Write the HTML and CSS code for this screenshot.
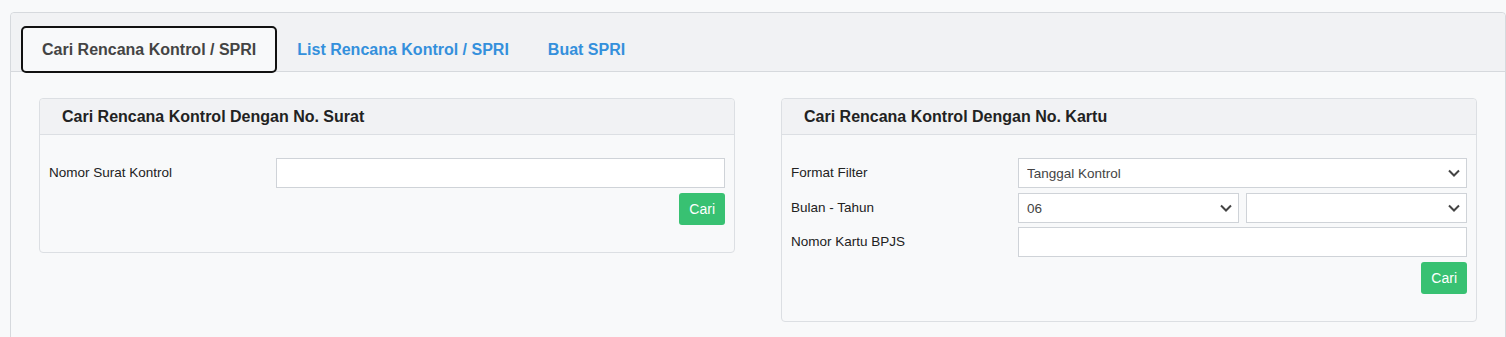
FILE: index.html
```html
<!DOCTYPE html>
<html>
<head>
    <title>Rencana Kontrol / SPRI</title>
    <meta charset="utf-8">
    <link rel="stylesheet" href="styles.css">
</head>
<body>
    <div class="panel">
        <!-- tab -->
        <div class="tabs">
            <a class="tab active" href="#">Cari Rencana Kontrol / SPRI</a>
            <a class="tab" href="#">List Rencana Kontrol / SPRI</a>
            <a class="tab" href="#">Buat SPRI</a>
        </div>

        <div class="tab-body">
            <!-- cari dengan no. surat -->
            <div class="card">
                <div class="card-header">Cari Rencana Kontrol Dengan No. Surat</div>
                <div class="card-body">
                    <div class="form-row">
                        <label>Nomor Surat Kontrol</label>
                        <input type="text" class="form-control">
                    </div>
                    <div class="actions">
                        <button class="btn-success">Cari</button>
                    </div>
                </div>
            </div>

            <!-- cari dengan no. kartu -->
            <div class="card">
                <div class="card-header">Cari Rencana Kontrol Dengan No. Kartu</div>
                <div class="card-body">
                    <div class="form-row">
                        <label>Format Filter</label>
                        <select class="form-control">
                            <option>Tanggal Kontrol</option>
                            <option>Tanggal Entri</option>
                        </select>
                    </div>
                    <div class="form-row">
                        <label>Bulan - Tahun</label>
                        <div class="split">
                            <select class="form-control">
                                <option>06</option>
                            </select>
                            <select class="form-control">
                                <option></option>
                            </select>
                        </div>
                    </div>
                    <div class="form-row tight">
                        <label>Nomor Kartu BPJS</label>
                        <input type="text" class="form-control">
                    </div>
                    <div class="actions">
                        <button class="btn-success">Cari</button>
                    </div>
                </div>
            </div>
        </div>
    </div>
</body>
</html>
```

FILE: styles.css
```css
body, html {
    margin: 0;
    padding: 0;
    background: #f8f9fa;
    font-family: 'Liberation Sans', Arial, sans-serif;
    color: #212529;
}

body {
    padding: 12px 0 0 10px;
}

.panel {
    border: 1px solid #d6d9dd;
    border-radius: 4px 4px 0 0;
    height: 340px;
    box-sizing: border-box;
    background: #f8f9fa;
}

.tabs {
    display: flex;
    background: #f1f2f4;
    border-bottom: 1px solid #d6d9dd;
    border-radius: 4px 4px 0 0;
    padding: 13px 10px 0;
    height: 45px;
}

.tab {
    display: block;
    height: 47px;
    line-height: 43px;
    box-sizing: border-box;
    padding: 0 17px 0 18px;
    border: 2px solid transparent;
    border-radius: 5px;
    font-size: 16px;
    font-weight: bold;
    color: #3490dc;
    text-decoration: none;
}

.tab.active {
    padding: 0 19px;
    color: #444;
    border-color: #111;
    background: #f8f9fa;
    position: relative;
    z-index: 1;
}

.tab-body {
    display: flex;
    gap: 46px;
    padding: 26px 28px 0;
    align-items: flex-start;
}

.card {
    flex: 1;
    border: 1px solid #dcdfe3;
    border-radius: 4px;
    background: #f8f9fa;
}

.card-header {
    background: #f1f2f4;
    border-bottom: 1px solid #dcdfe3;
    border-radius: 4px 4px 0 0;
    height: 35px;
    line-height: 35px;
    padding-left: 22px;
    font-size: 16px;
    font-weight: bold;
    color: #222;
}

.card-body {
    padding: 23px 9px 27px 9px;
}

.form-row {
    display: grid;
    grid-template-columns: 227px 1fr;
    align-items: center;
    margin-bottom: 5px;
}

.form-row.tight {
    margin-top: -1px;
}

.form-row label {
    font-size: 13.5px;
    color: #222;
    margin-top: -2px;
}

.form-control {
    display: block;
    width: 100%;
    height: 30px;
    box-sizing: border-box;
    border: 1px solid #cfd3d8;
    border-radius: 0;
    background: #fff;
    padding: 0 8px;
    font-family: 'Liberation Sans', Arial, sans-serif;
    font-size: 13.5px;
    color: #444;
}

select.form-control {
    appearance: none;
    background-image: url("data:image/svg+xml,%3Csvg xmlns='http://www.w3.org/2000/svg' width='12' height='8' viewBox='0 0 12 8'%3E%3Cpath d='M1 1.5l5 5 5-5' fill='none' stroke='%23444' stroke-width='2'/%3E%3C/svg%3E");
    background-repeat: no-repeat;
    background-position: right 6px center;
}

.split {
    display: flex;
    gap: 7px;
}

.actions {
    display: flex;
    justify-content: flex-end;
}

.btn-success {
    height: 32px;
    padding: 0 10px;
    border: none;
    border-radius: 3px;
    background: #38c172;
    color: #fff;
    font-family: 'Liberation Sans', Arial, sans-serif;
    font-size: 14px;
}
```
